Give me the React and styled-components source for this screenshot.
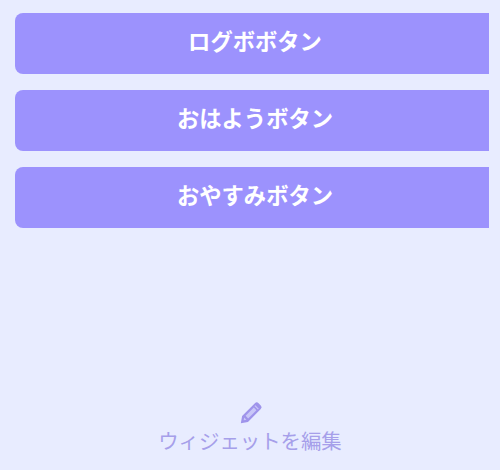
import React from "react";
import styled, { createGlobalStyle } from "styled-components";

const GlobalStyle = createGlobalStyle`
  html, body {
    margin: 0;
    padding: 0;
    background: #e8ecff;
  }
  * {
    box-sizing: border-box;
  }
`;

const Page = styled.div`
  width: 500px;
  height: 470px;
  padding: 13px 11px 0 15px;
  display: flex;
  flex-direction: column;
  justify-content: space-between;
  overflow: hidden;
  background: #e8ecff;
  font-family: "Liberation Sans", "Noto Sans CJK JP", sans-serif;
`;

const ButtonList = styled.div`
  display: flex;
  flex-direction: column;
  gap: 16px;
`;

const WidgetButton = styled.button`
  height: 61px;
  padding: 0 0 8px 6px;
  border: 0;
  border-radius: 8px 0 0 8px;
  background: #9c92fd;
  color: #fff;
  font-family: inherit;
  font-size: 22.3px;
  font-weight: 700;
  text-align: center;
`;

const EditLink = styled.div`
  display: flex;
  flex-direction: column;
  align-items: center;
  height: 69px;
  padding-right: 4px;
  color: #a69fea;
  font-size: 20.4px;
  line-height: 30px;
  svg {
    display: block;
    margin: -1px 0 1px 1px;
    color: #9f94eb;
  }
`;

function PencilIcon() {
  return (
    <svg width="26" height="26" viewBox="0 0 24 24" fill="none">
      <path
        d="M2.6 21.4l1.2-6.6L15.6 3a2.4 2.4 0 0 1 3.4 0l2 2a2.4 2.4 0 0 1 0 3.4L9.2 20.2z"
        fill="currentColor"
      />
      <path d="M7 14.6l7.6-7.6 2.4 2.4-7.6 7.6z" fill="#c9c7f8" />
      <path d="M15.6 5.2l3.2 3.2" stroke="#c9c7f8" strokeWidth="1.2" />
      <path d="M5.2 18.8l.5-2.6 2.1 2.1z" fill="#c9c7f8" />
    </svg>
  );
}

export default function App() {
  return (
    <Page>
      <GlobalStyle />
      <ButtonList>
        <WidgetButton>ログボボタン</WidgetButton>
        <WidgetButton>おはようボタン</WidgetButton>
        <WidgetButton>おやすみボタン</WidgetButton>
      </ButtonList>
      <EditLink>
        <PencilIcon />
        ウィジェットを編集
      </EditLink>
    </Page>
  );
}
